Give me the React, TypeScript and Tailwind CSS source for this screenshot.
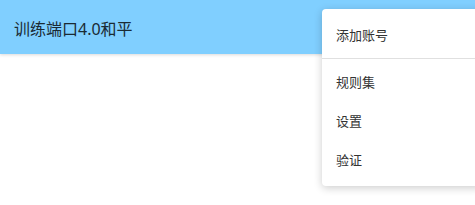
export default function App() {
  const items = ['规则集', '设置', '验证']

  return (
    <div
      className="relative h-[205px] w-[475px] overflow-hidden bg-white"
      style={{ fontFamily: '"Noto Sans", "Noto Sans CJK SC", sans-serif' }}
    >
      <header className="flex h-[54px] items-center bg-[#80cfff] px-[14px] pt-[3px] shadow-[0_1px_3px_rgba(0,0,0,0.15)]">
        <h1 className="text-[16px] leading-none text-[#1a2a33]">训练端口4.0和平</h1>
      </header>

      <div className="absolute left-[322px] top-[9px] w-[160px] rounded-[4px] bg-white shadow-[0_2px_8px_rgba(0,0,0,0.2)]">
        <div className="flex h-[49px] items-center px-[14px] pt-[4px] text-[13px] text-[#333]">添加账号</div>
        <div className="h-px bg-[#e0e0e0]" />
        <div className="flex flex-col pt-[4px] pb-[6px]">
          {items.map((label) => (
            <div key={label} className="flex h-[39px] items-center px-[14px] text-[13px] text-[#333]">
              {label}
            </div>
          ))}
        </div>
      </div>
    </div>
  )
}
